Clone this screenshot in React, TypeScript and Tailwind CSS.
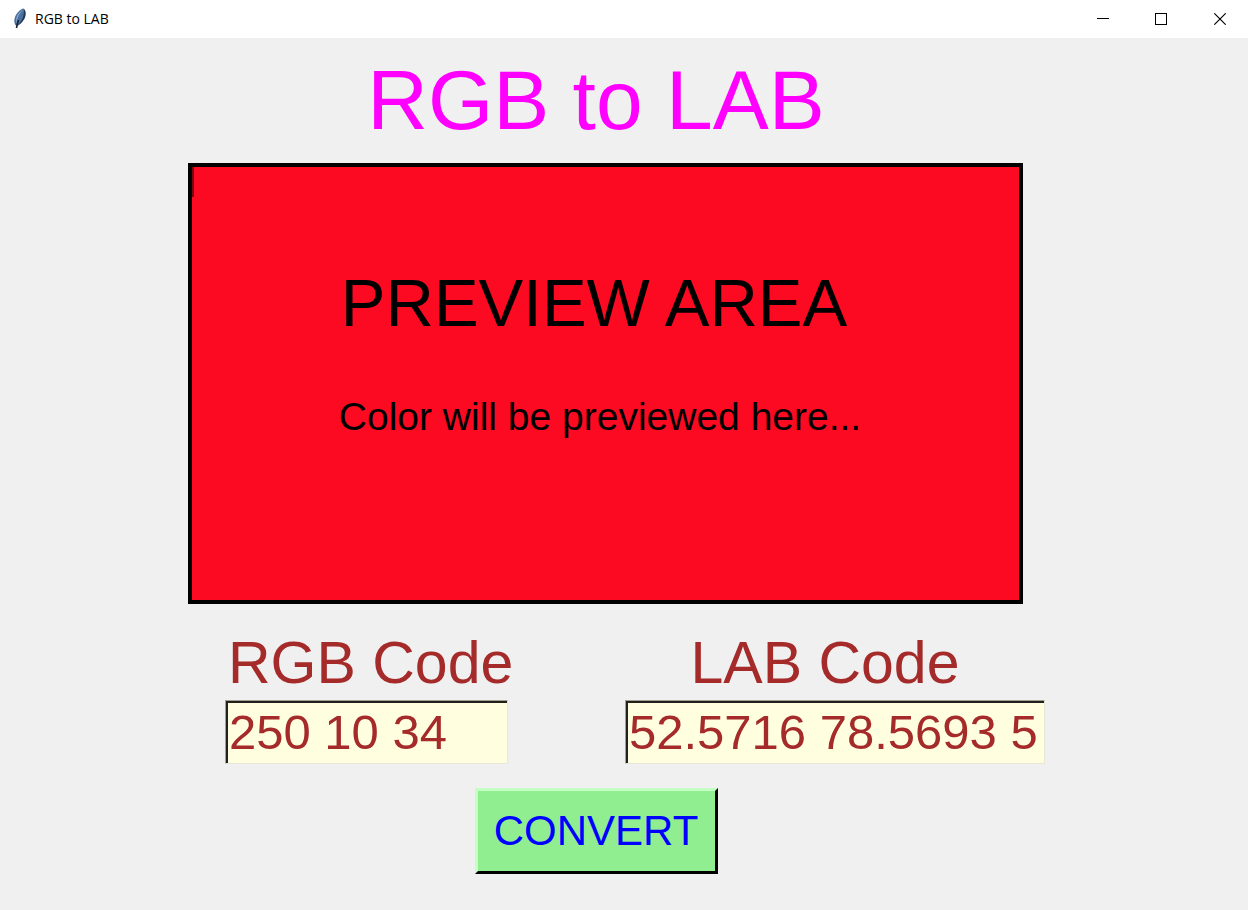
import { useState } from 'react';

function FeatherIcon() {
  return (
    <svg width="16" height="22" viewBox="0 0 16 22" aria-hidden="true">
      <path d="M11.500 0.500 C8.500 1 4.500 5 3 9 C2 12 2 14.500 3.300 17 L5 18 C8.500 16 12.300 12.500 13.300 8 C13.900 5 13.400 2 11.500 0.500 Z" fill="#4a70a2" />
      <path d="M11 1.800 C8.500 3 5.500 6.500 4.500 10 C4 12 3.800 14 4.200 15.500 C5 10 7.500 5 11 1.800 Z" fill="#8fadd2" />
      <path d="M12 1 C13.600 2.500 13.900 5 13.300 8 C12.300 12.500 8.500 16 5 18 C9.500 14 12.400 8 12 1 Z" fill="#26384f" />
      <path d="M6.500 12 C5.500 15 5 17 4.500 20" stroke="#1c222b" strokeWidth="1.600" fill="none" />
    </svg>
  );
}

function TitleBar() {
  const control = 'flex h-full w-[58px] items-center justify-center hover:bg-gray-200';
  return (
    <header className="flex h-[38px] items-center justify-between bg-white pl-3">
      <div className="flex items-center gap-[7px]">
        <FeatherIcon />
        <span className="font-['Open_Sans','Noto_Sans',sans-serif] text-sm leading-5 text-black">RGB to LAB</span>
      </div>
      <div className="flex h-full">
        <button type="button" aria-label="Minimize" className={control}>
          <svg width="12" height="12" viewBox="0 0 12 12" shapeRendering="crispEdges">
            <path d="M0 5.500 H12" stroke="#000" />
          </svg>
        </button>
        <button type="button" aria-label="Maximize" className={control}>
          <svg width="12" height="12" viewBox="0 0 12 12" shapeRendering="crispEdges">
            <rect x="0.500" y="0.500" width="11" height="11" fill="none" stroke="#000" />
          </svg>
        </button>
        <button type="button" aria-label="Close" className={control}>
          <svg width="14" height="12" viewBox="0 0 14 12">
            <path d="M2.300 0.300 L13.700 11.700 M13.700 0.300 L2.300 11.700" stroke="#000" strokeWidth="1.100" />
          </svg>
        </button>
      </div>
    </header>
  );
}

type FieldProps = {
  id: string;
  label: string;
  value: string;
  onChange: (value: string) => void;
  className: string;
  labelClassName: string;
};

function CodeField({ id, label, value, onChange, className, labelClassName }: FieldProps) {
  return (
    <div className={className}>
      <label htmlFor={id} className={`block whitespace-nowrap text-[59px] leading-[68px] text-[#a52a2a] ${labelClassName}`}>
        {label}
      </label>
      <div className="mt-[3px] border border-t-[#a0a090] border-r-[#e8e8d8] border-b-[#e8e8d8] border-l-[#a0a090]">
        <input
          id={id}
          type="text"
          value={value}
          onChange={(e) => onChange(e.target.value)}
          className="block h-[62px] w-full border-t-2 border-l-2 border-[#20201c] bg-[#ffffe0] px-px pb-[3px] text-[49px] leading-[56px] text-[#a52a2a] outline-none"
        />
      </div>
    </div>
  );
}

export default function App() {
  const [rgb, setRgb] = useState('250 10 34');
  const [lab, setLab] = useState('52.5716 78.5693 5');

  return (
    <div className="flex min-h-screen flex-col bg-[#f0f0f0] font-['Liberation_Sans',Arial,sans-serif]">
      <TitleBar />
      <main className="flex flex-col items-center pt-[14px] pr-14 pb-9">
        <h1 className="text-[84px] leading-[96px] text-[#ff00ff]">RGB to LAB</h1>

        <section className="relative mt-[15px] ml-[18px] flex h-[441px] w-full max-w-[835px] flex-col items-center border-4 border-black bg-[#fb0a22] pt-[98px] text-black">
          <span className="absolute top-0 left-0 h-[30px] w-[2px] bg-[#7d0511]" />
          <h2 className="mr-[22px] text-[67px] leading-[76px]">PREVIEW AREA</h2>
          <p className="mt-[53px] mr-[10px] text-[39px] leading-[46px]">Color will be previewed here...</p>
        </section>

        <form className="flex w-full flex-col items-center" onSubmit={(e) => e.preventDefault()}>
          <div className="mt-[25px] ml-[78px] flex w-full max-w-[820px] justify-between">
            <CodeField id="rgb" label="RGB Code" value={rgb} onChange={setRgb} className="w-[283px]" labelClassName="pl-[3px]" />
            <CodeField id="lab" label="LAB Code" value={lab} onChange={setLab} className="w-[420px]" labelClassName="pr-5 text-center" />
          </div>
          <button
            type="submit"
            className="mt-6 h-[86px] w-[243px] border-[3px] border-t-[#c4ffc4] border-r-black border-b-black border-l-[#c4ffc4] bg-[#90ee90] text-[42px] leading-[48px] text-[#0000ff]"
          >
            CONVERT
          </button>
        </form>
      </main>
    </div>
  );
}
